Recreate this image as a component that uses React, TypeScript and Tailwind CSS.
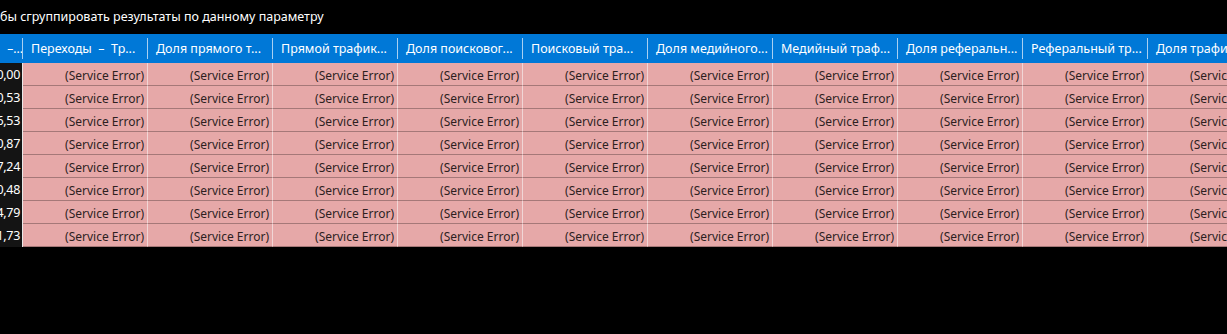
const headers = [
  'Переходы  –  Тр...',
  'Доля прямого т...',
  'Прямой трафик...',
  'Доля поисковог...',
  'Поисковый тра...',
  'Доля медийного...',
  'Медийный траф...',
  'Доля реферальн...',
  'Реферальный тр...',
  'Доля трафика из соцсетей',
]

const firstCol = ['10,00', '10,53', '16,53', '10,87', '17,24', '10,48', '14,79', '11,73']

export default function App() {
  return (
    <div className="w-[1227px] h-[334px] bg-black overflow-hidden font-['Noto_Sans','Open_Sans',sans-serif] text-[12px]">
      {/* Group hint */}
      <div className="h-[34px] flex items-center text-white text-[12.5px] whitespace-nowrap">
        бы сгруппировать результаты по данному параметру
      </div>

      {/* Grid */}
      <div className="grid grid-cols-[23px_repeat(10,125px)] w-max">
        {/* Header */}
        <div className="h-[29px] bg-[#0078d7] relative flex items-center justify-end pt-[1px] overflow-hidden text-white whitespace-nowrap">
          –...
          <span className="absolute right-0 top-[4px] bottom-[4px] w-px bg-[#a9d0f2]" />
        </div>
        {headers.map((h, i) => (
          <div key={h} className="h-[29px] bg-[#0078d7] relative flex items-center pl-[8px] pt-[1px] text-white text-[12.5px] whitespace-pre overflow-hidden">
            {h}
            {i < headers.length - 1 && (
              <span className="absolute right-0 top-[4px] bottom-[4px] w-px bg-[#a9d0f2]" />
            )}
          </div>
        ))}

        {/* Rows */}
        {firstCol.map((v, r) => (
          <div key={r} className="contents">
            <div className="h-[23px] bg-[#141414] border-r border-[#e8e8e8] flex items-center justify-end pt-[2px] pr-[2px] overflow-hidden whitespace-nowrap text-white text-[12.5px] tracking-[-0.3px]">
              {r === 7 ? (
                <>
                  <span className="text-[#d22]">1</span>1,73
                </>
              ) : (
                v
              )}
            </div>
            {headers.map((h) => (
              <div
                key={h}
                className="h-[23px] bg-[#e6a8a8] border-b border-r border-b-[#a57878] border-r-[#f1d6d6] flex items-center justify-end pt-[3px] pr-[3px] text-[#2d1f1f] whitespace-nowrap"
              >
                (Service Error)
              </div>
            ))}
          </div>
        ))}
      </div>
    </div>
  )
}
